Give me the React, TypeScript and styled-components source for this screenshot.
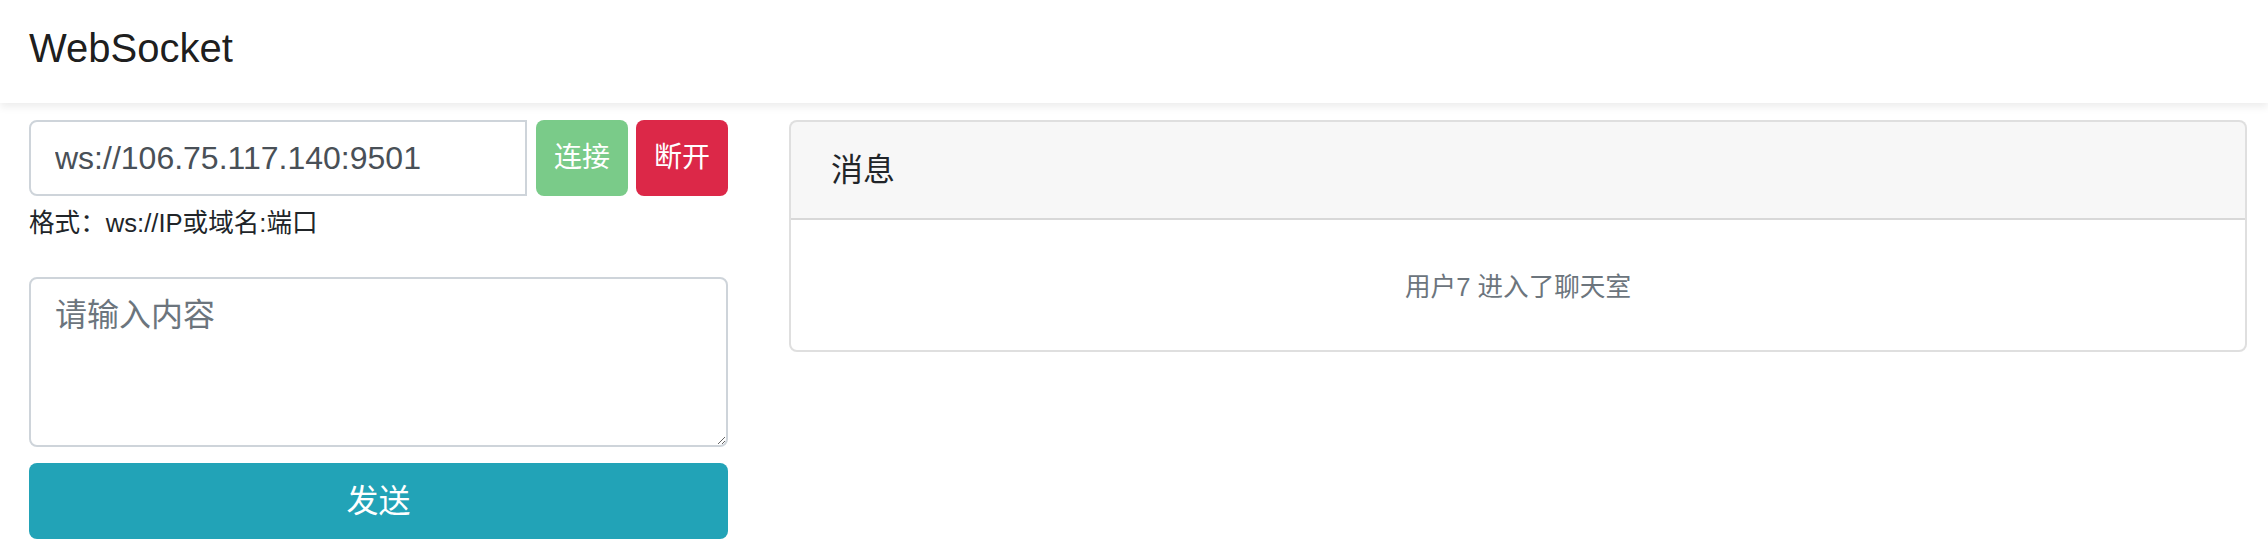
import React from 'react'
import styled, { createGlobalStyle } from 'styled-components'

const FONT = `"Liberation Sans", "Noto Sans CJK SC", sans-serif`

const GlobalStyle = createGlobalStyle`
  html, body {
    margin: 0;
    padding: 0;
    background: #fff;
  }
  body {
    font-family: ${FONT};
    font-size: 32px;
    line-height: 1.5;
    color: #212529;
  }
  * {
    box-sizing: border-box;
  }
`

const Navbar = styled.nav`
  position: relative;
  z-index: 1;
  height: 103px;
  padding: 18px 29px 0;
  background: #fff;
  box-shadow: 0 4px 8px rgba(0, 0, 0, 0.075);
`

const Brand = styled.div`
  font-size: 40px;
  line-height: 60px;
  color: rgba(0, 0, 0, 0.9);
`

const Main = styled.main`
  display: grid;
  grid-template-columns: 699px 1fr;
  column-gap: 61px;
  align-items: start;
  padding: 17px 21px 0 29px;
`

const Column = styled.section`
  display: flex;
  flex-direction: column;
`

const InputGroup = styled.div`
  display: flex;
  align-items: stretch;
  gap: 8px;
  height: 76px;
`

const AddressInput = styled.input`
  flex: 1;
  min-width: 0;
  margin-right: 1px;
  padding: 0 24px;
  font-family: ${FONT};
  font-size: 32px;
  color: #495057;
  background: #fff;
  border: 2px solid #ced4da;
  border-radius: 8px 0 0 8px;
  outline: none;
`

const Button = styled.button<{ $tone: string; $block?: boolean }>`
  width: ${(p) => (p.$block ? '100%' : '92px')};
  height: 76px;
  padding: 0;
  font-family: ${FONT};
  font-size: ${(p) => (p.$block ? '32px' : '28px')};
  line-height: 1.5;
  color: #fff;
  background: ${(p) => p.$tone};
  border: none;
  border-radius: 8px;
  cursor: pointer;
`

const Hint = styled.small`
  display: block;
  margin-top: 8px;
  font-size: 25.6px;
  line-height: 1.5;
  color: #212529;
`

const MessageBox = styled.textarea`
  display: block;
  width: 100%;
  height: 170px;
  margin-top: 35px;
  padding: 12px 24px;
  font-family: ${FONT};
  font-size: 32px;
  line-height: 1.5;
  color: #495057;
  border: 2px solid #ced4da;
  border-radius: 8px;
  outline: none;

  &::placeholder {
    color: #6c757d;
  }
`

const SendRow = styled.div`
  margin-top: 16px;
`

const Card = styled.div`
  border: 2px solid rgba(0, 0, 0, 0.125);
  border-radius: 8px;
  overflow: hidden;
  background: #fff;
`

const CardHeader = styled.div`
  padding: 24px 40px;
  font-size: 32px;
  line-height: 48px;
  color: #212529;
  background: rgba(0, 0, 0, 0.03);
  border-bottom: 2px solid rgba(0, 0, 0, 0.125);
`

const CardBody = styled.div`
  padding: 41px 40px 39px;
  line-height: 48px;
  text-align: center;
`

const Notice = styled.small`
  font-size: 25.6px;
  color: #6c757d;
`

export default function App() {
  return (
    <>
      <GlobalStyle />
      <Navbar>
        <Brand>WebSocket</Brand>
      </Navbar>
      <Main>
        <Column>
          <InputGroup>
            <AddressInput defaultValue="ws://106.75.117.140:9501" />
            <Button $tone="#7acb89">连接</Button>
            <Button $tone="#dc2848">断开</Button>
          </InputGroup>
          <Hint>格式：ws://IP或域名:端口</Hint>
          <MessageBox placeholder="请输入内容" />
          <SendRow>
            <Button $tone="#22a3b7" $block>
              发送
            </Button>
          </SendRow>
        </Column>
        <Card>
          <CardHeader>消息</CardHeader>
          <CardBody>
            <Notice>用户7 进入了聊天室</Notice>
          </CardBody>
        </Card>
      </Main>
    </>
  )
}
